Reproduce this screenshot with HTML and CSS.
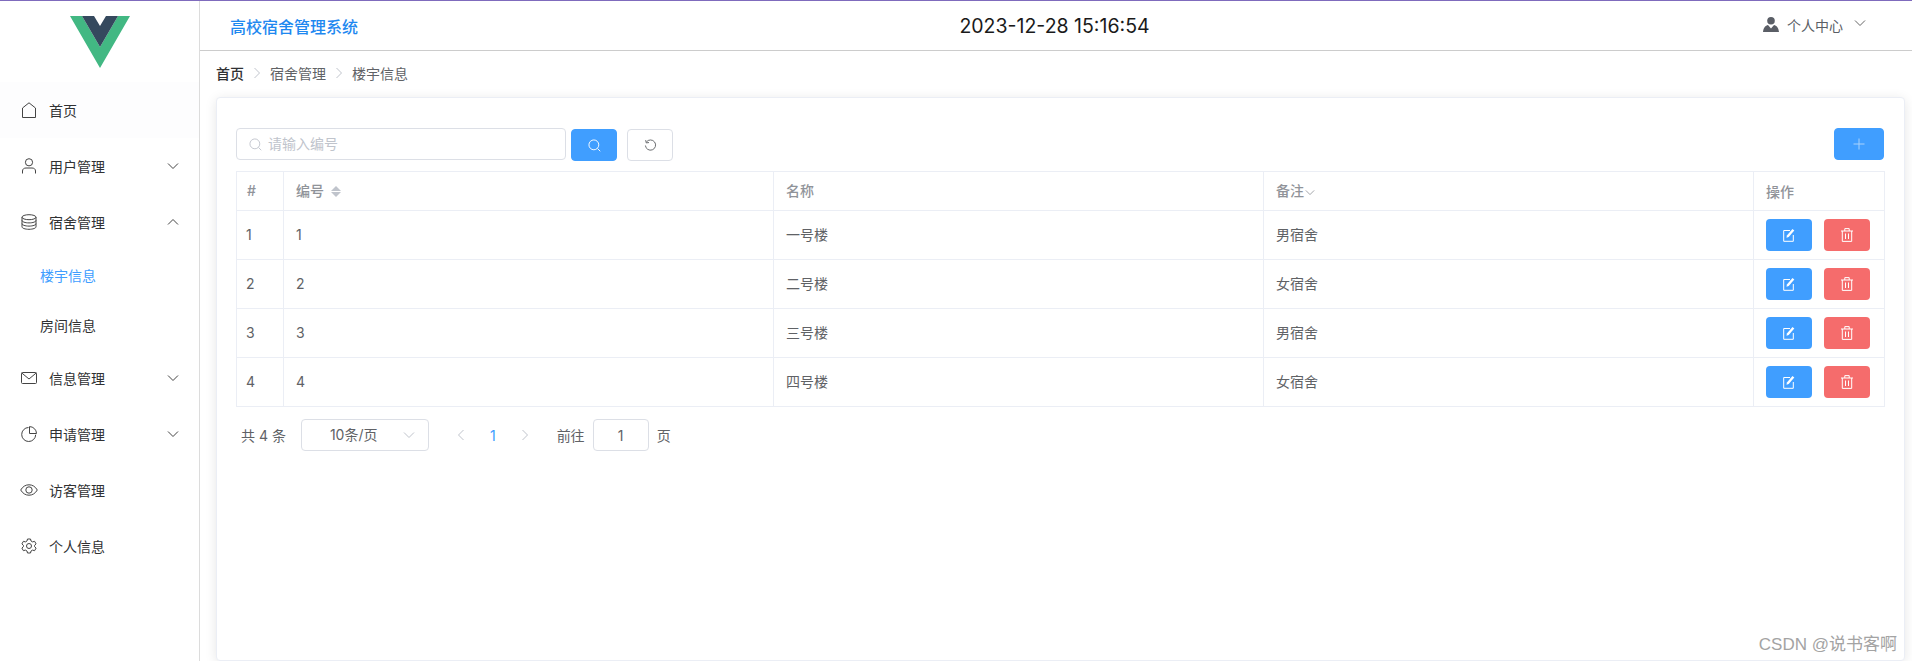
FILE: index.html
```html
<!DOCTYPE html>
<html lang="zh">
<head>
<meta charset="utf-8">
<title>高校宿舍管理系统</title>
<link rel="stylesheet" href="styles.css">
</head>
<body>
<svg class="defs" width="0" height="0" aria-hidden="true">
  <symbol id="i-down" viewBox="0 0 12 8"><path d="M1 1.500l5 5 5-5" fill="none" stroke="currentColor" stroke-width="1"/></symbol>
  <symbol id="i-up" viewBox="0 0 12 8"><path d="M1 6.500l5-5 5 5" fill="none" stroke="currentColor" stroke-width="1"/></symbol>
  <symbol id="i-left" viewBox="0 0 8 12"><path d="M6.500 1l-5 5 5 5" fill="none" stroke="currentColor" stroke-width="1"/></symbol>
  <symbol id="i-right" viewBox="0 0 8 12"><path d="M1.500 1l5 5-5 5" fill="none" stroke="currentColor" stroke-width="1"/></symbol>
  <symbol id="i-search" viewBox="0 0 14 14"><circle cx="6.300" cy="6.300" r="5.300" fill="none" stroke="currentColor" stroke-width="1"/><path d="M10.200 10.200l3 3" fill="none" stroke="currentColor" stroke-width="1"/></symbol>
  <symbol id="i-edit" viewBox="0 0 12 14"><path d="M7 2.500H.7v10.800h9.600V7" fill="none" stroke="currentColor" stroke-width="1"/><path d="M3.500 9.800l.4-2.300L9.500 1l1.800 1.500-5.600 6.500z" fill="currentColor"/></symbol>
  <symbol id="i-trash" viewBox="0 0 12 14"><path d="M0 3h12M3.800 3V.6h4.400V3M1.300 3v10.400h9.400V3M4.500 5.500v5.500M7.500 5.500v5.500" fill="none" stroke="currentColor" stroke-width="1"/></symbol>
</svg>
<div class="app">
  <aside class="side">
    <div class="logo">
      <svg width="60" height="52" viewBox="0 0 60 52"><path d="M0 0h12l18 31L48 0h12L30 52z" fill="#42b883"/><path d="M12 0h12l6 10 6-10h12L30 31z" fill="#35495e"/></svg>
    </div>
    <nav class="menu">
      <a class="item item-home">
        <svg class="ico" viewBox="0 0 16 16"><path d="M1.500 15.500V6L8 .8 14.500 6v9.500z" fill="none" stroke="currentColor"/></svg>
        <span class="lab">首页</span>
      </a>
      <a class="item">
        <svg class="ico" viewBox="0 0 16 16"><circle cx="8" cy="4.300" r="3.600" fill="none" stroke="currentColor"/><path d="M1.500 15.500v-2.500C1.500 11 3 10 5 10h6c2 0 3.500 1 3.500 3v2.500" fill="none" stroke="currentColor"/></svg>
        <span class="lab">用户管理</span>
        <svg class="arr"><use href="#i-down"/></svg>
      </a>
      <a class="item">
        <svg class="ico" viewBox="0 0 16 16"><ellipse cx="8" cy="3.200" rx="7" ry="2.500" fill="none" stroke="currentColor"/><path d="M1 3.200v9.600c0 1.400 3.100 2.500 7 2.500s7-1.100 7-2.500V3.200M1 6.400c0 1.400 3.100 2.500 7 2.500s7-1.100 7-2.500M1 9.600c0 1.400 3.100 2.500 7 2.500s7-1.100 7-2.500" fill="none" stroke="currentColor"/></svg>
        <span class="lab">宿舍管理</span>
        <svg class="arr"><use href="#i-up"/></svg>
      </a>
      <a class="sub sub-on">楼宇信息</a>
      <a class="sub">房间信息</a>
      <a class="item">
        <svg class="ico" viewBox="0 0 16 14"><rect x=".5" y="1.500" width="15" height="11" rx="1" fill="none" stroke="currentColor"/><path d="M.8 2L8 8l7.200-6" fill="none" stroke="currentColor"/></svg>
        <span class="lab">信息管理</span>
        <svg class="arr"><use href="#i-down"/></svg>
      </a>
      <a class="item">
        <svg class="ico" viewBox="0 0 16 16"><path d="M7.500 1.500a7 7 0 1 0 7.200 7.200" fill="none" stroke="currentColor"/><path d="M8.500.6v6.900h7A7 7 0 0 0 8.500.6z" fill="none" stroke="currentColor"/></svg>
        <span class="lab">申请管理</span>
        <svg class="arr"><use href="#i-down"/></svg>
      </a>
      <a class="item">
        <svg class="ico ico-eye" viewBox="0 0 18 12"><path d="M.7 6C2.800 2.400 5.700.8 9 .8s6.200 1.600 8.300 5.200c-2.100 3.600-5 5.200-8.300 5.200S2.800 9.600.7 6z" fill="none" stroke="currentColor"/><circle cx="9" cy="6" r="3.200" fill="none" stroke="currentColor"/></svg>
        <span class="lab">访客管理</span>
      </a>
      <a class="item">
        <svg class="ico" viewBox="0 0 16 16"><path d="M6.500 1h3l.5 2 1.600.9 2-.6 1.500 2.600-1.500 1.400v1.400l1.500 1.400-1.500 2.600-2-.6-1.600.9-.5 2h-3l-.5-2-1.600-.9-2 .6L.9 10.100l1.500-1.400V7.300L.9 5.900l1.500-2.600 2 .6L6 3z" fill="none" stroke="currentColor"/><circle cx="8" cy="8" r="2.500" fill="none" stroke="currentColor"/></svg>
        <span class="lab">个人信息</span>
      </a>
    </nav>
  </aside>
  <div class="main">
    <header class="head">
      <div class="title">高校宿舍管理系统</div>
      <div class="clock">2023-12-28 15:16:54</div>
      <div class="user">
        <svg class="user-ico" viewBox="0 0 16 15"><circle cx="8" cy="3.800" r="3.800" fill="#5a5e66"/><path d="M0 15c.5-4.500 2.500-6.500 5-7l3 3.500L11 8c2.500.5 4.500 2.500 5 7z" fill="#5a5e66"/></svg>
        <span class="user-name">个人中心</span>
        <svg class="user-arr"><use href="#i-down"/></svg>
      </div>
    </header>
    <div class="crumbs">
      <span class="crumb-first">首页</span>
      <svg class="sep"><use href="#i-right"/></svg>
      <span>宿舍管理</span>
      <svg class="sep"><use href="#i-right"/></svg>
      <span>楼宇信息</span>
    </div>
    <section class="card">
      <div class="bar">
        <div class="field">
          <svg class="field-ico"><use href="#i-search"/></svg>
          <span class="ph">请输入编号</span>
        </div>
        <button class="btn btn-blue btn-search"><svg class="btn-ico"><use href="#i-search"/></svg></button>
        <button class="btn btn-reset">
          <svg class="btn-ico" viewBox="0 0 14 14"><path d="M2.600 3.200A5.500 5.500 0 1 1 1.500 7" fill="none" stroke="currentColor"/><path d="M1.800 1.200l.6 3 3-.4" fill="none" stroke="currentColor"/></svg>
        </button>
        <button class="btn btn-blue btn-add">
          <svg class="add-ico" viewBox="0 0 12 12"><path d="M6 .500v11M.5 6h11" fill="none" stroke="currentColor"/></svg>
        </button>
      </div>
      <table class="grid">
        <colgroup><col class="c1"><col class="c2"><col class="c3"><col class="c4"><col class="c5"></colgroup>
        <thead>
          <tr>
            <th>#</th>
            <th>编号<span class="sort"><i class="sort-up"></i><i class="sort-down"></i></span></th>
            <th>名称</th>
            <th>备注<svg class="th-arr"><use href="#i-down"/></svg></th>
            <th>操作</th>
          </tr>
        </thead>
        <tbody>
          <tr><td>1</td><td>1</td><td>一号楼</td><td>男宿舍</td><td><div class="ops"><button class="op op-blue"><svg class="op-ico"><use href="#i-edit"/></svg></button><button class="op op-red"><svg class="op-ico"><use href="#i-trash"/></svg></button></div></td></tr>
          <tr><td>2</td><td>2</td><td>二号楼</td><td>女宿舍</td><td><div class="ops"><button class="op op-blue"><svg class="op-ico"><use href="#i-edit"/></svg></button><button class="op op-red"><svg class="op-ico"><use href="#i-trash"/></svg></button></div></td></tr>
          <tr><td>3</td><td>3</td><td>三号楼</td><td>男宿舍</td><td><div class="ops"><button class="op op-blue"><svg class="op-ico"><use href="#i-edit"/></svg></button><button class="op op-red"><svg class="op-ico"><use href="#i-trash"/></svg></button></div></td></tr>
          <tr><td>4</td><td>4</td><td>四号楼</td><td>女宿舍</td><td><div class="ops"><button class="op op-blue"><svg class="op-ico"><use href="#i-edit"/></svg></button><button class="op op-red"><svg class="op-ico"><use href="#i-trash"/></svg></button></div></td></tr>
        </tbody>
      </table>
      <div class="pager">
        <span class="total">共 4 条</span>
        <div class="select"><span class="select-val">10条/页</span><svg class="select-arr"><use href="#i-down"/></svg></div>
        <svg class="pg-arr pg-prev"><use href="#i-left"/></svg>
        <span class="pg-num">1</span>
        <svg class="pg-arr pg-next"><use href="#i-right"/></svg>
        <span class="jump">前往</span>
        <div class="jump-box">1</div>
        <span class="jump-end">页</span>
      </div>
    </section>
  </div>
</div>
<div class="mark">CSDN @说书客啊</div>
</body>
</html>
```
FILE: styles.css
```css
* { box-sizing: border-box; }
html, body { margin: 0; height: 100%; overflow: hidden; background: #fff; }
body { font-family: "Inter", "Noto Sans CJK SC", sans-serif; color: #606266; font-size: 14px; }
.defs { position: absolute; }
.app { display: flex; height: 661px; border-top: 1px solid #7f6bbd; }
.side { width: 200px; flex: none; border-right: 1px solid #dcdcdc; background: #fff; }
.logo { display: flex; justify-content: center; padding-top: 15px; height: 81px; }
.menu { display: flex; flex-direction: column; }
.item { display: flex; align-items: center; height: 56px; padding-left: 21px; color: #303133; font-size: 14px; }
.item-home { background: #fdfdfe; }
.ico { width: 16px; height: 16px; color: #444; flex: none; }
.ico-eye { width: 18px; margin-left: -1px; margin-right: -1px; }
.lab { margin-left: 12px; flex: 1; }
.arr { width: 12px; height: 8px; margin-right: 20px; color: #444; }
.sub { display: flex; align-items: center; height: 50px; padding-left: 40px; color: #303133; font-size: 14px; }
.sub-on { color: #409eff; }
.main { flex: 1; min-width: 0; display: flex; flex-direction: column; overflow: hidden; }
.head { display: grid; grid-template-columns: 1fr auto 1fr; align-items: center; height: 50px; flex: none; border-bottom: 1px solid #ccc; padding: 0 27px 0 30px; }
.title { color: #1e88f0; font-size: 16px; font-weight: 500; }
.clock { color: #1a1a1a; font-size: 19.500px; margin-right: 6px; }
.user { display: flex; align-items: center; justify-content: flex-end; padding: 0 19px 2px 0; }
.user-ico { width: 16px; height: 15px; }
.user-name { margin-left: 8px; font-size: 14px; color: #5a5e66; }
.user-arr { width: 12px; height: 8px; margin-left: 11px; color: #666; margin-bottom: 3px; }
.crumbs { display: flex; align-items: center; height: 46px; flex: none; padding: 0 0 2px 16px; font-size: 14px; color: #606266; }
.crumb-first { color: #303133; font-weight: 500; }
.sep { width: 8px; height: 12px; margin: 0 9px; color: #c0c4cc; }
.card { flex: 1; margin: 0 7px 0 16px; padding: 30px 20px 0 19px; border: 1px solid #ebeef5; border-radius: 4px; box-shadow: 0 2px 12px rgba(0,0,0,.1); background: #fff; }
.bar { display: flex; align-items: flex-start; height: 32px; margin-bottom: 11px; }
.field { display: flex; align-items: center; width: 330px; height: 32px; border: 1px solid #dcdfe6; border-radius: 4px; padding-left: 12px; }
.field-ico { width: 13px; height: 13px; color: #c0c4cc; }
.ph { margin: 0 0 2px 6px; color: #c0c4cc; font-size: 14px; }
.btn { display: flex; align-items: center; justify-content: center; height: 32px; border-radius: 4px; padding: 0; border: 1px solid #409eff; background: #409eff; color: #fff; }
.btn-ico { width: 13px; height: 13px; }
.btn-search { width: 46px; margin: 1px 0 0 5px; }
.btn-reset { width: 46px; margin: 1px 0 0 10px; background: #fff; border-color: #dcdfe6; color: #606266; }
.btn-add { width: 50px; margin-left: auto; }
.add-ico { width: 12px; height: 12px; color: #a9d2fb; }
.grid { width: 1648px; table-layout: fixed; border-collapse: collapse; border: 1px solid #ebeef5; font-size: 14px; }
.c1 { width: 47px; } .c2 { width: 490px; } .c3 { width: 490px; } .c4 { width: 490px; } .c5 { width: 131px; }
.grid th, .grid td { border: 1px solid #ebeef5; padding: 0 0 2px 12px; text-align: left; }
.grid th:first-child { padding-left: 10px; }
.grid td:first-child { padding-left: 9px; }
.grid th:last-child, .grid td:last-child { padding: 0 0 0 12px; }
.grid th { height: 39px; font-weight: 500; color: #909399; }
.grid td { height: 49px; color: #606266; }
.sort { display: inline-block; vertical-align: middle; margin-left: 7px; width: 10px; height: 11px; position: relative; top: -1px; }
.sort-up, .sort-down { display: block; width: 0; height: 0; border-left: 5px solid transparent; border-right: 5px solid transparent; }
.sort-up { border-bottom: 5px solid #c0c4cc; margin-bottom: 1px; }
.sort-down { border-top: 5px solid #c0c4cc; }
.th-arr { width: 10px; height: 7px; margin-left: 1px; color: #909399; }
.ops { display: flex; gap: 12px; }
.op { display: flex; align-items: center; justify-content: center; width: 46px; height: 32px; padding: 0; border: 0; border-radius: 4px; color: #fff; }
.op-blue { background: #409eff; }
.op-red { background: #f56c6c; }
.op-ico { width: 12px; height: 14px; }
.pager { display: flex; align-items: center; height: 32px; margin-top: 12px; padding-left: 5px; font-size: 14px; color: #606266; }
.select { display: flex; align-items: center; justify-content: space-between; width: 128px; height: 32px; margin-left: 15px; padding: 0 13px 0 28px; border: 1px solid #dcdfe6; border-radius: 4px; }
.select-val { margin-bottom: 2px; }
.select-arr { width: 12px; height: 8px; color: #c0c4cc; }
.pg-arr { width: 8px; height: 12px; color: #c0c4cc; }
.pg-prev { margin-left: 28px; }
.pg-num { margin-left: 25px; color: #409eff; }
.pg-next { margin-left: 25px; }
.jump { margin-left: 28px; }
.jump-box { display: flex; align-items: center; justify-content: center; width: 56px; height: 32px; margin-left: 8px; border: 1px solid #dcdfe6; border-radius: 4px; }
.jump-end { margin-left: 8px; }
.mark { position: absolute; right: 15px; bottom: 6px; color: #a3a3a3; font: 17px "Liberation Sans", "Noto Sans CJK SC", sans-serif; }
```
